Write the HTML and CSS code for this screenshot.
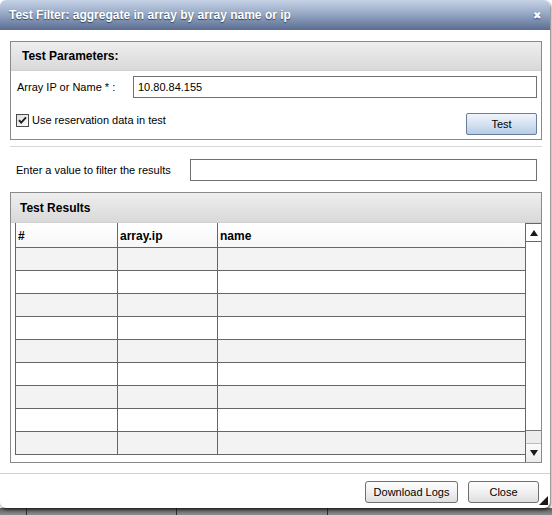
FILE: index.html
```html
<!DOCTYPE html>
<html lang="en">
<head>
  <meta charset="UTF-8">
  <title>Test Filter</title>
  <link rel="stylesheet" href="styles.css">
</head>
<body>
  <div class="dialog">
    <div class="titlebar">
      <span class="title">Test Filter: aggregate in array by array name or ip</span>
      <span class="close">&#x2716;</span>
    </div>

    <div class="content">
      <!-- параметры теста -->
      <div class="panel params">
        <div class="panel-head">Test Parameters:</div>
        <div class="panel-body">
          <div class="field">
            <label class="field-label">Array IP or Name * :</label>
            <input type="text" class="text-input" value="10.80.84.155">
          </div>
          <div class="field field-check">
            <label class="check">
              <span class="check-box">
                <svg width="13" height="13" viewBox="0 0 13 13">
                  <defs>
                    <linearGradient id="cb" x1="0" y1="0" x2="1" y2="1">
                      <stop offset="0" stop-color="#dcdcd8"/>
                      <stop offset="1" stop-color="#ffffff"/>
                    </linearGradient>
                  </defs>
                  <rect x="0.5" y="0.5" width="12" height="12" fill="url(#cb)" stroke="#4a4a4a"/>
                  <path d="M3 6.2 L5.2 8.6 L10 3.4" fill="none" stroke="#1e1e1e" stroke-width="1.9"/>
                </svg>
              </span>
              Use reservation data in test
            </label>
            <button class="btn btn-blue">Test</button>
          </div>
        </div>
      </div>

      <div class="sep"></div>

      <div class="filter">
        <span class="filter-label">Enter a value to filter the results</span>
        <input type="text" class="text-input filter-input">
      </div>

      <!-- результаты -->
      <div class="panel results">
        <div class="panel-head">Test Results</div>
        <div class="grid-wrap">
          <table class="grid">
            <colgroup>
              <col class="c-num">
              <col class="c-ip">
              <col>
            </colgroup>
            <thead>
              <tr><th>#</th><th>array.ip</th><th>name</th></tr>
            </thead>
            <tbody>
              <tr><td></td><td></td><td></td></tr>
              <tr><td></td><td></td><td></td></tr>
              <tr><td></td><td></td><td></td></tr>
              <tr><td></td><td></td><td></td></tr>
              <tr><td></td><td></td><td></td></tr>
              <tr><td></td><td></td><td></td></tr>
              <tr><td></td><td></td><td></td></tr>
              <tr><td></td><td></td><td></td></tr>
              <tr><td></td><td></td><td></td></tr>
            </tbody>
          </table>
          <div class="scrollbar">
            <div class="sb-btn"><span class="arrow-up"></span></div>
            <div class="sb-thumb"></div>
            <div class="sb-track"></div>
            <div class="sb-btn sb-down"><span class="arrow-down"></span></div>
          </div>
        </div>
      </div>
    </div>

    <div class="footer">
      <button class="btn btn-logs">Download Logs</button>
      <button class="btn btn-close">Close</button>
      <span class="grip"></span>
    </div>
  </div>

  <div class="underlay">
    <span class="u1"></span>
    <span class="u2"></span>
    <span class="u3"></span>
    <span class="u4"></span>
  </div>
</body>
</html>
```

FILE: styles.css
```css
* {
  margin: 0;
  padding: 0;
  box-sizing: border-box;
}

body {
  width: 552px;
  height: 515px;
  overflow: hidden;
  background: #fff;
  font-family: "Liberation Sans", Arial, sans-serif;
  font-size: 11px;
  color: #000;
}

.dialog {
  position: relative;
  z-index: 1;
  width: 550px;
  height: 508px;
  display: flex;
  flex-direction: column;
  background: #fff;
  border-radius: 6px;
  box-shadow: 1px 2px 3px rgba(0, 0, 0, 0.6);
}

.titlebar {
  height: 30px;
  flex: none;
  display: flex;
  align-items: center;
  justify-content: space-between;
  padding: 0 9px 0 9px;
  border-radius: 6px 6px 0 0;
  background: linear-gradient(#c6d3e6, #97a9c5 45%, #5a6d91);
}

.title {
  color: #fff;
  font-weight: bold;
  font-size: 12px;
  text-shadow: 0 1px 1px #33415c;
}

.close {
  color: #fff;
  font-size: 10px;
  text-shadow: 0 1px 1px #33415c;
}

.content {
  padding: 11px 8px 0 10px;
}

.panel {
  border: 1px solid #8a8a8a;
}

.panel-head {
  height: 29px;
  display: flex;
  align-items: center;
  padding-left: 11px;
  font-size: 12px;
  font-weight: bold;
  background: linear-gradient(#efeeee, #d9d9d9);
  border-bottom: 1px solid #cfcfcf;
}

.results .panel-head {
  height: 30px;
  padding-left: 9px;
}

.panel-body {
  padding: 5px 4px 4px 6px;
}

.field {
  display: flex;
  align-items: center;
  height: 22px;
}

.field-label {
  width: 116px;
  flex: none;
}

.text-input {
  flex: 1;
  height: 22px;
  border: 1px solid #707070;
  padding: 0 4px;
  font-family: "Liberation Sans", Arial, sans-serif;
  font-size: 11px;
  color: #000;
  outline: none;
}

.field-check {
  margin-top: 15px;
  justify-content: space-between;
  align-items: flex-start;
}

.check {
  display: flex;
  align-items: center;
  gap: 3px;
  margin-left: -1px;
  height: 14px;
}

.check-box {
  display: flex;
  width: 13px;
  height: 13px;
}

.btn {
  height: 22px;
  border: 1px solid #707070;
  border-radius: 3px;
  background: linear-gradient(#fdfdfd, #f1f1f1 50%, #dedede);
  font-family: "Liberation Sans", Arial, sans-serif;
  font-size: 11px;
  color: #000;
}

.btn-blue {
  width: 71px;
  border-color: #6a7d9c;
  border-radius: 2px;
  background: linear-gradient(#f1f5fb, #d5e2f2 50%, #b7cbe5);
}

.sep {
  height: 1px;
  margin-top: 6px;
  background: #d6d6d6;
}

.filter {
  display: flex;
  align-items: center;
  margin-top: 12px;
  padding: 0 5px 0 6px;
}

.filter-label {
  width: 174px;
  flex: none;
}

.results {
  margin-top: 11px;
}

.grid-wrap {
  display: flex;
  height: 239px;
  padding-left: 4px;
}

.grid {
  flex: 1;
  align-self: flex-start;
  table-layout: fixed;
  border-collapse: separate;
  border-spacing: 0;
  border-left: 1px solid #666;
}

.c-num {
  width: 102px;
}

.c-ip {
  width: 100px;
}

.grid th,
.grid td {
  padding: 0 0 0 2px;
  border-bottom: 1px solid #666;
  text-align: left;
}

.grid th:not(:last-child),
.grid td:not(:last-child) {
  border-right: 1px solid #666;
}

.grid thead tr {
  height: 25px;
}

.grid th {
  font-size: 12px;
  font-weight: bold;
  padding-top: 2px;
  background: linear-gradient(#fff, #f7f7f7);
}

.grid tbody tr {
  height: 23px;
}

.grid tbody tr:nth-child(odd) {
  background: #f3f3f3;
}

.grid tbody tr:nth-child(even) {
  background: #fff;
}

.scrollbar {
  width: 16px;
  flex: none;
  display: flex;
  flex-direction: column;
  border: 1px solid #666;
  border-right: none;
  border-bottom: none;
  background: #ececec;
}

.sb-btn {
  height: 18px;
  display: flex;
  align-items: center;
  justify-content: center;
  background: #fff;
  border-bottom: 1px solid #666;
}

.sb-down {
  height: 19px;
  border-bottom: none;
  border-top: 1px solid #bdbdbd;
  background: linear-gradient(#fbfbfb, #ebebeb);
}

.sb-thumb {
  height: 189px;
  background: #fff;
  border-bottom: 1px solid #777;
}

.sb-track {
  flex: 1;
}

.arrow-up {
  width: 0;
  height: 0;
  border-left: 4px solid transparent;
  border-right: 4px solid transparent;
  border-bottom: 6px solid #1a1a1a;
}

.arrow-down {
  width: 0;
  height: 0;
  border-left: 4px solid transparent;
  border-right: 4px solid transparent;
  border-top: 6px solid #1a1a1a;
}

.footer {
  position: relative;
  margin-top: auto;
  height: 35px;
  display: flex;
  justify-content: flex-end;
  align-items: flex-start;
  gap: 10px;
  padding: 7px 11px 0 0;
  border-top: 1px solid #d2d2d2;
}

.btn-logs {
  width: 93px;
}

.btn-close {
  width: 71px;
}

.grip {
  position: absolute;
  right: 2px;
  bottom: 3px;
  width: 0;
  height: 0;
  border-left: 9px solid transparent;
  border-bottom: 9px solid #1a1a1a;
}

.underlay {
  height: 7px;
  display: flex;
  background: linear-gradient(#5c5c5c, #8c8c8c);
}

.underlay span {
  border-left: 1px solid #2e2e2e;
}

.u1 {
  width: 26px;
  border-left: none !important;
}

.u2 {
  width: 150px;
}

.u3 {
  width: 151px;
}

.u4 {
  flex: 1;
}
```
